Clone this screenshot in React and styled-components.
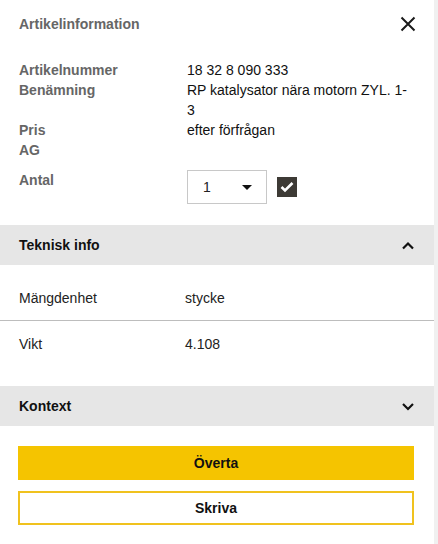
import React from 'react'
import styled, { createGlobalStyle } from 'styled-components'

const GlobalStyle = createGlobalStyle`
  * { box-sizing: border-box; }
  body { margin: 0; font-family: "Liberation Sans", Arial, sans-serif; font-size: 14px; color: #111; background: #fff; }
`;

const Page = styled.div`
  display: flex; min-height: 544px; width: 438px;
`;

const Panel = styled.div`
  flex: 1; display: flex; flex-direction: column; background: #fff;
`;

const Track = styled.div`
  width: 4px; background: #f0f0f0;
`;

const Header = styled.header`
  height: 48px; padding: 0 19px; display: flex; align-items: center; justify-content: space-between;
`;

const Title = styled.h2`
  margin: 0; font-size: 14px; font-weight: 700; color: #666;
`;

const CloseButton = styled.button`
  border: none; background: none; padding: 0; width: 16px; height: 16px; cursor: pointer;
  display: flex; align-items: center; justify-content: center; margin-right: -1px;
`;

const InfoGrid = styled.div`
  display: grid; grid-template-columns: 168px 1fr; margin-top: 12px; padding: 0 26px 0 19px;
  line-height: 20px;
`;

const Label = styled.div`
  font-weight: 700; color: #666;
`;

const Value = styled.div`
  color: #111;
`;

const QtyRow = styled.div`
  display: grid; grid-template-columns: 168px 1fr; padding: 0 19px; margin-top: 10px;
  line-height: 20px;
`;

const QtyControls = styled.div`
  display: flex; align-items: center; gap: 10px;
`;

const Select = styled.div`
  width: 80px; height: 34px; border: 1px solid #c8c8c8; display: flex; align-items: center;
  justify-content: space-between; padding: 0 14px 0 15px; color: #222;
`;

const Caret = styled.span`
  width: 0; height: 0; border-left: 5px solid transparent; border-right: 5px solid transparent;
  border-top: 5px solid #111;
`;

const Check = styled.span`
  width: 20px; height: 20px; background: #3d3a35; display: flex; align-items: center; justify-content: center;
`;

const SectionBar = styled.div`
  height: 40px; background: #e6e6e6; display: flex; align-items: center; justify-content: space-between;
  padding: 0 19px; margin-top: ${p => p.$top}px; font-weight: 700; color: #111;
`;

const SpecList = styled.div`
  padding: 10px 0 20px;
`;

const SpecRow = styled.div`
  display: grid; grid-template-columns: 166px 1fr; padding: 13px 19px 12px; line-height: 20px;
  border-bottom: ${p => (p.$divider ? '1px solid #bdbdbd' : 'none')};
  color: #222;
`;

const Actions = styled.div`
  display: flex; flex-direction: column; gap: 11px; padding: 20px 20px 0 18px;
`;

const Button = styled.button`
  height: 34px; width: 100%; font-family: inherit; font-size: 14px; font-weight: 700; color: #111;
  cursor: pointer;
  background: ${p => (p.$primary ? '#f5c400' : '#fff')};
  border: ${p => (p.$primary ? 'none' : '2px solid #f0c21e')};
`;

const Chevron = ({ up }) => (
  <svg width="14" height="9" viewBox="0 0 14 9">
    <polyline
      points={up ? '2,7.5 7,2.5 12,7.5' : '2,2 7,7 12,2'}
      fill="none" stroke="#111" strokeWidth="2.2" />
  </svg>
);

export default function App() {
  return (
    <Page>
      <GlobalStyle />
      <Panel>
        <Header>
          <Title>Artikelinformation</Title>
          <CloseButton aria-label="Stäng">
            <svg width="16" height="16" viewBox="0 0 16 16">
              <path d="M1.5 1.5 L14.5 14.5 M14.5 1.5 L1.5 14.5" stroke="#1a1a1a" strokeWidth="2" />
            </svg>
          </CloseButton>
        </Header>
        <InfoGrid>
          <Label>Artikelnummer</Label>
          <Value>18 32 8 090 333</Value>
          <Label>Benämning</Label>
          <Value>RP katalysator nära motorn ZYL. 1-3</Value>
          <Label>Pris</Label>
          <Value>efter förfrågan</Value>
          <Label>AG</Label>
          <Value></Value>
        </InfoGrid>
        <QtyRow>
          <Label>Antal</Label>
          <QtyControls>
            <Select>1<Caret /></Select>
            <Check>
              <svg width="14" height="12" viewBox="0 0 14 12">
                <polyline points="1.5,6 5,9.5 12.5,2" fill="none" stroke="#fff" strokeWidth="2.6" />
              </svg>
            </Check>
          </QtyControls>
        </QtyRow>
        <SectionBar $top={21}>
          Teknisk info
          <Chevron up />
        </SectionBar>
        <SpecList>
          <SpecRow $divider>
            <span>Mängdenhet</span>
            <span>stycke</span>
          </SpecRow>
          <SpecRow>
            <span>Vikt</span>
            <span>4.108</span>
          </SpecRow>
        </SpecList>
        <SectionBar $top={0}>
          Kontext
          <Chevron />
        </SectionBar>
        <Actions>
          <Button $primary>Överta</Button>
          <Button>Skriva</Button>
        </Actions>
      </Panel>
      <Track />
    </Page>
  );
}
